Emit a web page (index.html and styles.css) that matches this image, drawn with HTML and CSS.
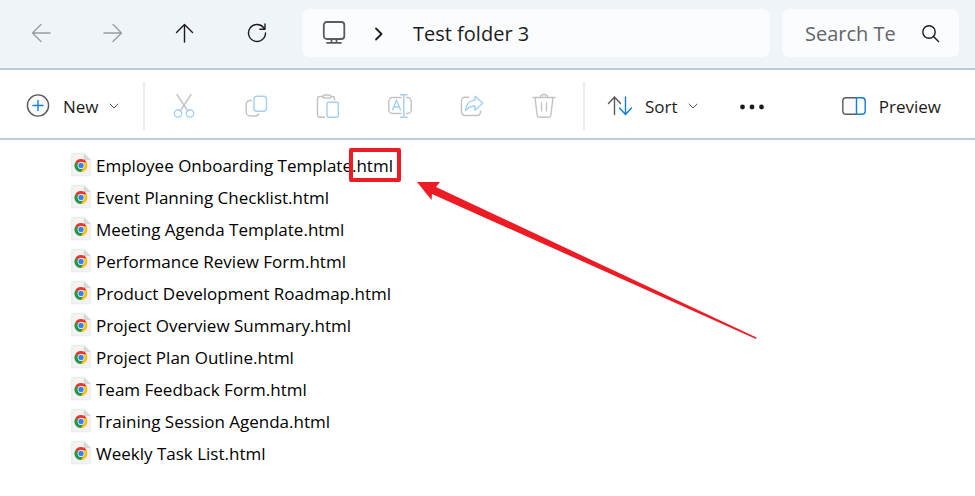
FILE: index.html
```
<!DOCTYPE html>
<html lang="en">
<head>
<meta charset="utf-8">
<meta name="viewport" content="width=device-width, initial-scale=1.0">
<title>Test folder 3</title>
<link rel="stylesheet" href="styles.css">
</head>
<body>
<!-- shared file icon -->
<svg class="defs" width="0" height="0" aria-hidden="true">
  <symbol id="chrome-file" viewBox="0 0 20 24">
    <path d="M2 .5h11l6.500 6.500v14a1.500 1.500 0 0 1-1.500 1.500H2A1.500 1.500 0 0 1 .5 21V2A1.500 1.500 0 0 1 2 .5z" fill="#f3f3f4" stroke="#ececee"/>
    <path d="M13 .5V7h6.500z" fill="#d6d7da"/>
    <circle cx="10" cy="12.500" r="6.500" fill="#fbc116"/>
    <path d="M10 12.500L4.370 9.250A6.500 6.500 0 0 1 15.630 9.250H10z" fill="#e33b2e"/>
    <path d="M10 12.500L4.370 9.250A6.500 6.500 0 0 0 10 19L12.800 14.100z" fill="#219a4b"/>
    <circle cx="10" cy="12.500" r="3.400" fill="#fff"/>
    <circle cx="10" cy="12.500" r="2.700" fill="#3c7fe8"/>
  </symbol>
</svg>

<header class="nav">
  <div class="nav-buttons">
    <button class="nav-btn off" aria-label="Back"><svg viewBox="0 0 24 24"><path d="M21 12H3.500M12 3.500L3.500 12L12 20.500"/></svg></button>
    <button class="nav-btn off" aria-label="Forward"><svg viewBox="0 0 24 24"><path d="M3 12h17.500M12 3.500L20.500 12L12 20.500"/></svg></button>
    <button class="nav-btn" aria-label="Up"><svg viewBox="0 0 24 24"><path d="M11.500 21V3.500M3.500 11.500L11.500 3.500L19.500 11.500"/></svg></button>
    <button class="nav-btn" aria-label="Refresh"><svg viewBox="0 0 24 24"><path d="M20.500 12A8.500 8.500 0 1 1 18.500 6.500L20 8M20 3v5.200h-5.200"/></svg></button>
  </div>
  <div class="address">
    <svg class="pc" viewBox="0 0 24 24"><rect x="1.800" y="1" width="20.500" height="17" rx="3"/><path d="M9.500 18v3.500M14.500 18v3.500M5 21.800h14"/></svg>
    <svg class="crumb" viewBox="0 0 12 24"><path d="M3 7.500l5.500 5.500L3 18.500"/></svg>
    <span>Test folder 3</span>
  </div>
  <div class="search">
    <input type="text" placeholder="Search Te" aria-label="Search">
    <svg viewBox="0 0 24 24"><circle cx="10" cy="11" r="6.200"/><path d="M14.500 15.500l5 5"/></svg>
  </div>
</header>

<div class="toolbar">
  <button class="tool new">
    <svg viewBox="0 0 24 24"><circle cx="12" cy="11.500" r="10.600" fill="#fafafa"/><path class="accent" d="M12 6.500v10M7 11.500h10"/></svg>
    <span>New</span>
    <svg class="chev" viewBox="0 0 10 10"><path d="M1 3l4 4l4-4"/></svg>
  </button>
  <div class="sep"></div>
  <button class="tool icon off" aria-label="Cut"><svg viewBox="0 0 24 24"><path d="M5 .5L15.700 17M19 .5L8.300 17"/><circle class="accent" cx="6" cy="19.500" r="3.700"/><circle class="accent" cx="18" cy="19.500" r="3.700"/></svg></button>
  <button class="tool icon off" aria-label="Copy"><svg viewBox="0 0 24 24"><path d="M7.500 6.500H6A3.500 3.500 0 0 0 2.300 10v8A4 4 0 0 0 6.300 22H11q3 0 3.500-2"/><rect class="accent" x="10" y="2.200" width="12.500" height="15" rx="3"/></svg></button>
  <button class="tool icon off" aria-label="Paste"><svg viewBox="0 0 24 24"><path d="M7 2.500H3.500A2 2 0 0 0 1.500 4.500V21a2 2 0 0 0 2 2.200H8.500M15 2.500h1.500a2 2 0 0 1 2 2v1.500"/><rect x="6.800" y="1" width="8" height="3" rx="1.500"/><rect class="accent" x="11" y="8.200" width="11.300" height="15" rx="1.500"/></svg></button>
  <button class="tool icon off" aria-label="Rename"><svg viewBox="0 0 24 24"><path d="M13 3.500H4.500A3.800 3.800 0 0 0 .8 7.300v8.400a3.800 3.800 0 0 0 3.700 3.800H13M18.500 3.500h1A3.800 3.800 0 0 1 23.200 7.300v8.400a3.800 3.800 0 0 1-3.700 3.800h-1"/><path class="accent" d="M12.500.7h6.500M15.800.7v22.600M12.500 23.300h6.500M4.500 16L8.500 6L12.500 16M5.800 13h5.500"/></svg></button>
  <button class="tool icon off" aria-label="Share"><svg viewBox="0 0 24 24"><path d="M9 3.300H5A3.500 3.500 0 0 0 1.500 6.800v11.200A3.500 3.500 0 0 0 5 21.500h12a3.500 3.500 0 0 0 3.500-3.500v-1"/><path class="accent" d="M15 2.200L22.800 9.200L15 16.200V12C11 12 8.500 13 5.500 16.500C6 10 10 6.300 15 6z"/></svg></button>
  <button class="tool icon off" aria-label="Delete"><svg viewBox="0 0 24 24"><path d="M1 3.500h22M8.500 3.500q0-3 3.500-3t3.500 3M3 3.500L5.200 21.500q.3 1.700 2 1.700h9.600q1.700 0 2-1.700L21 3.500M9.500 9v8M14.500 9v8"/></svg></button>
  <div class="sep"></div>
  <button class="tool sort">
    <svg viewBox="0 0 24 24"><path d="M6.500 20.500V3M.5 9.500l6-6.500l6 6.500"/><path class="accent" d="M17.500 3V20.500M11.500 14l6 6.500l6-6.500"/></svg>
    <span>Sort</span>
    <svg class="chev" viewBox="0 0 10 10"><path d="M1 3l4 4l4-4"/></svg>
  </button>
  <button class="tool icon dots" aria-label="See more"><svg viewBox="0 0 24 24"><circle cx="2.500" cy="13" r="2.400"/><circle cx="12" cy="13" r="2.400"/><circle cx="21.500" cy="13" r="2.400"/></svg></button>
  <button class="tool preview">
    <svg viewBox="0 0 24 24"><path fill="#fafafa" d="M14.500 3.700H4A3.300 3.300 0 0 0 .8 7v10A3.300 3.300 0 0 0 4 20.300h10.500"/><path class="accent" d="M14.500 3.700H20A3.300 3.300 0 0 1 23.200 7v10a3.300 3.300 0 0 1-3.200 3.300h-5.500z"/></svg>
    <span>Preview</span>
  </button>
</div>

<main class="content">
  <ul class="files">
    <li><svg><use href="#chrome-file"/></svg><span>Employee Onboarding Template.<span class="ext">html</span></span></li>
    <li><svg><use href="#chrome-file"/></svg><span>Event Planning Checklist.html</span></li>
    <li><svg><use href="#chrome-file"/></svg><span>Meeting Agenda Template.html</span></li>
    <li><svg><use href="#chrome-file"/></svg><span>Performance Review Form.html</span></li>
    <li><svg><use href="#chrome-file"/></svg><span>Product Development Roadmap.html</span></li>
    <li><svg><use href="#chrome-file"/></svg><span>Project Overview Summary.html</span></li>
    <li><svg><use href="#chrome-file"/></svg><span>Project Plan Outline.html</span></li>
    <li><svg><use href="#chrome-file"/></svg><span>Team Feedback Form.html</span></li>
    <li><svg><use href="#chrome-file"/></svg><span>Training Session Agenda.html</span></li>
    <li><svg><use href="#chrome-file"/></svg><span>Weekly Task List.html</span></li>
  </ul>
  <!-- arrow pointing at the extension -->
  <svg class="arrow" viewBox="0 0 340 158"><path d="M0 0L23 0L19 5L339.500 155.500L339 157L15 12L14.500 18z"/></svg>
</main>
</body>
</html>
```
FILE: styles.css
```
* {
  margin: 0;
  padding: 0;
  box-sizing: border-box;
}
body {
  background: #fff;
  color: #1b1b1b;
  font-family: "Open Sans", "Noto Sans", sans-serif;
  font-size: 17px;
}
button {
  background: none;
  border: none;
  color: inherit;
  font: inherit;
}
svg {
  display: block;
  flex: none;
  width: 24px;
  height: 24px;
  overflow: visible;
  fill: none;
  stroke: currentColor;
  stroke-width: 1.4;
  stroke-linecap: round;
  stroke-linejoin: round;
}
.defs {
  position: absolute;
  width: 0;
  height: 0;
}

/* top bar */
.nav {
  display: flex;
  align-items: center;
  height: 70px;
  padding: 0 16px 2px 5px;
  gap: 12px;
  background: #eff4f9;
  border-bottom: 2px solid #bccadb;
}
.nav-buttons {
  display: flex;
}
.nav-btn {
  display: flex;
  justify-content: center;
  width: 72px;
}
.nav-btn.off {
  color: #9a9da1;
}
.address,
.search {
  display: flex;
  align-items: center;
  height: 48px;
  background: #fbfcfe;
  border-radius: 7px;
  font-size: 20px;
}
.address {
  flex: 1;
  margin-left: -3px;
  padding-left: 20px;
}
.pc {
  color: #5c5c5c;
  stroke-width: 1.8;
}
.crumb {
  width: 12px;
  margin: 0 28px 0 27px;
  stroke-width: 1.8;
}
.search {
  width: 177px;
  padding: 0 16px 0 23px;
}
.search input {
  flex: 1;
  min-width: 0;
  background: none;
  border: none;
  outline: none;
  font: inherit;
}
.search input::placeholder {
  color: #62656a;
  opacity: 1;
}

/* command bar */
.toolbar {
  display: flex;
  align-items: center;
  height: 70px;
  padding: 4px 34px 0 26px;
  border-bottom: 2px solid #bccadb;
}
.tool {
  display: flex;
  align-items: center;
  gap: 13px;
}
.tool svg {
  color: #5a5a5a;
}
.tool .accent {
  stroke: #0f7fdb;
}
.tool.off svg {
  color: #c2c2c2;
}
.tool.off .accent {
  stroke: #a3d0f3;
}
.tool .chev {
  width: 10px;
  height: 10px;
  margin-left: -3px;
  stroke-width: 1;
}
.tool.icon {
  justify-content: center;
  width: 72px;
}
.new {
  width: 114px;
}
.sort {
  width: 128px;
  padding-left: 20px;
}
.dots svg {
  color: #1b1b1b;
  fill: #1b1b1b;
  stroke: none;
}
.preview {
  margin-left: auto;
}
.sep {
  width: 2px;
  height: 48px;
  margin: 0 3px;
  background: #ebebeb;
}

/* file list */
.content {
  position: relative;
  padding: 9px 0 10px 71px;
}
.files {
  list-style: none;
  color: #000;
}
.files li {
  display: flex;
  align-items: center;
  gap: 5px;
  height: 32px;
}
.files svg {
  width: 20px;
  stroke: none;
}
.ext {
  position: relative;
}
.ext::after {
  content: "";
  position: absolute;
  inset: -6px -8px -5px -7px;
  border: 4px solid #ed1c24;
  border-radius: 2px;
}
.arrow {
  position: absolute;
  top: 42px;
  left: 417px;
  width: 340px;
  height: 158px;
  fill: #ed1c24;
  stroke: none;
}
```
